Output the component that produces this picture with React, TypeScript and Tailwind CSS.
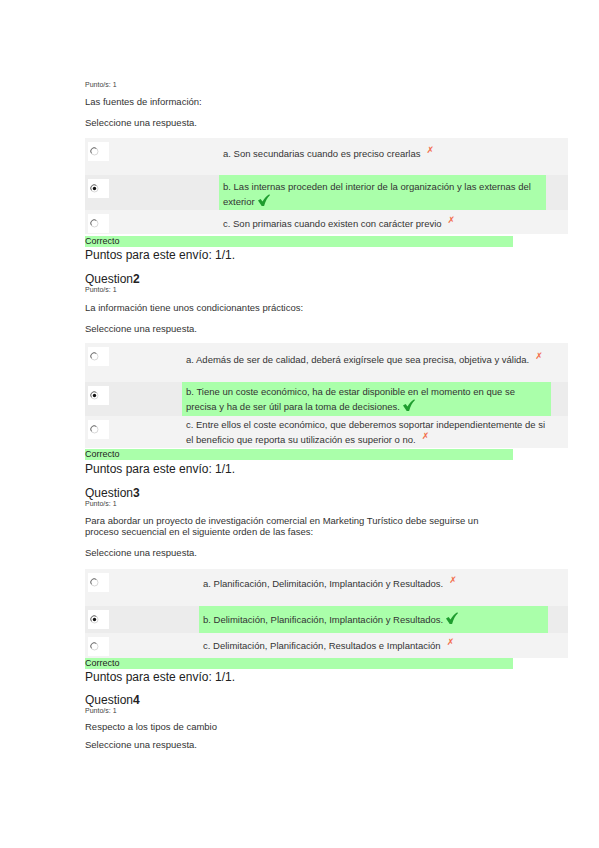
import React from "react";

type Answer = {
  row: string; // height + bg
  cell: string; // padding-top + line-height
  selected?: boolean;
  ok?: boolean;
  text: React.ReactNode;
};

type Question = {
  num?: number;
  head: string; // margin before heading block
  prompt: React.ReactNode;
  promptCls: string;
  selCls: string;
  tableCls: string;
  radioCol: string;
  greenW: string;
  answers: Answer[];
  tail?: { correcto: string; puntos: string };
};

function Radio({ checked }: { checked?: boolean }) {
  return (
    <svg width="9" height="9" viewBox="0 0 9 9">
      <circle cx="4.5" cy="4.5" r="3.5" fill="#fff" stroke="#d4d4d4" strokeWidth="0.9" />
      <path d="M1.4 6.3 A3.5 3.5 0 0 1 6.3 1.4" fill="none" stroke="#707070" strokeWidth="1" />
      {checked && <circle cx="4.5" cy="4.5" r="1.7" fill="#111" />}
    </svg>
  );
}

const Wrong = () => (
  <span className="ml-[6px] align-[4px] text-[9px] leading-none text-[#f26d4b] font-['DejaVu_Sans',sans-serif]">
    ✗
  </span>
);

const Right = () => (
  <svg width="12" height="12" viewBox="0 0 12 12" className="ml-[3px] inline-block align-[-1px]">
    <path
      d="M0 6.6 L2.6 5 L4.5 7.6 C6.1 4.6 8.3 2 11.3 0.2 L11.9 1.3 C9.3 3.8 7.3 7.4 6.1 12 L3.7 12 Z"
      fill="#1f9d2f"
    />
  </svg>
);

const questions: Question[] = [
  {
    head: "mt-0",
    prompt: "Las fuentes de información:",
    promptCls: "mt-[6px] leading-[12px]",
    selCls: "mt-[9px]",
    tableCls: "mt-[9px]",
    radioCol: "w-[134px]",
    greenW: "w-[327px]",
    answers: [
      { row: "h-[37px] bg-[#f3f3f3]", cell: "pt-[8px] leading-[14px]", text: <>a. Son secundarias cuando es preciso crearlas<Wrong /></> },
      {
        row: "h-[35px] bg-[#ececec]",
        cell: "pt-[4px] leading-[15px]",
        selected: true,
        ok: true,
        text: <>b. Las internas proceden del interior de la organización y las externas del<br />exterior<Right /></>,
      },
      { row: "h-[24px] bg-[#f3f3f3]", cell: "pt-[6px] leading-[14px]", text: <>c. Son primarias cuando existen con carácter previo<Wrong /></> },
    ],
    tail: { correcto: "mt-[2px]", puntos: "mt-[1px]" },
  },
  {
    num: 2,
    head: "mt-[11px]",
    prompt: "La información tiene unos condicionantes prácticos:",
    promptCls: "mt-[7px] leading-[12px]",
    selCls: "mt-[9px]",
    tableCls: "mt-[8px]",
    radioCol: "w-[97px]",
    greenW: "w-[369px]",
    answers: [
      { row: "h-[39px] bg-[#f3f3f3]", cell: "pt-[9px] leading-[14px]", text: <>a. Además de ser de calidad, deberá exigírsele que sea precisa, objetiva y válida.<Wrong /></> },
      {
        row: "h-[34px] bg-[#ececec]",
        cell: "pt-[3px] leading-[14px]",
        selected: true,
        ok: true,
        text: <>b. Tiene un coste económico, ha de estar disponible en el momento en que se<br />precisa y ha de ser útil para la toma de decisiones.<Right /></>,
      },
      {
        row: "h-[32px] bg-[#f3f3f3]",
        cell: "pt-[2px] leading-[14px]",
        text: <>c. Entre ellos el coste económico, que deberemos soportar independientemente de si<br />el beneficio que reporta su utilización es superior o no.<Wrong /></>,
      },
    ],
    tail: { correcto: "mt-[1px]", puntos: "mt-[2px]" },
  },
  {
    num: 3,
    head: "mt-[11px]",
    prompt: <>Para abordar un proyecto de investigación comercial en Marketing Turístico debe seguirse un<br />proceso secuencial en el siguiente orden de las fases:</>,
    promptCls: "mt-[6px] leading-[11px]",
    selCls: "mt-[10px]",
    tableCls: "mt-[10px]",
    radioCol: "w-[114px]",
    greenW: "w-[349px]",
    answers: [
      { row: "h-[37px] bg-[#f3f3f3]", cell: "pt-[7px] leading-[14px]", text: <>a. Planificación, Delimitación, Implantación y Resultados.<Wrong /></> },
      { row: "h-[27px] bg-[#ececec]", cell: "pt-[6px] leading-[14px]", selected: true, ok: true, text: <>b. Delimitación, Planificación, Implantación y Resultados.<Right /></> },
      { row: "h-[25px] bg-[#f3f3f3]", cell: "pt-[5px] leading-[14px]", text: <>c. Delimitación, Planificación, Resultados e Implantación<Wrong /></> },
    ],
    tail: { correcto: "mt-0", puntos: "mt-[1px]" },
  },
  {
    num: 4,
    head: "mt-[10px]",
    prompt: "Respecto a los tipos de cambio",
    promptCls: "mt-[5px] leading-[12px]",
    selCls: "mt-[6px]",
    tableCls: "",
    radioCol: "",
    greenW: "",
    answers: [],
  },
];

function QuestionBlock({ q }: { q: Question }) {
  return (
    <div className={q.head}>
      {q.num && (
        <div className="text-[12px] leading-[12px] text-[#222]">
          Question<span className="font-bold">{q.num}</span>
        </div>
      )}
      <div className="text-[7px] leading-[10px] text-[#444]">Punto/s: 1</div>
      <div className={`text-[9.5px] text-[#333] ${q.promptCls}`}>{q.prompt}</div>
      <div className={`text-[9.5px] leading-[12px] text-[#333] ${q.selCls}`}>Seleccione una respuesta.</div>

      {q.answers.length > 0 && (
        <div className={`flex w-[483px] flex-col ${q.tableCls}`}>
          {q.answers.map((a, i) => (
            <div key={i} className={`flex items-stretch ${a.row}`}>
              <div className={`shrink-0 pl-[3px] pt-[4px] ${q.radioCol}`}>
                <div className="flex h-[19px] w-[21px] items-center bg-white pl-[2px]">
                  <Radio checked={a.selected} />
                </div>
              </div>
              <div
                className={`shrink-0 pl-[4px] text-[9.5px] text-[#333] whitespace-nowrap ${q.greenW} ${a.cell} ${
                  a.ok ? "bg-[#aaffaa]" : ""
                }`}
              >
                {a.text}
              </div>
            </div>
          ))}
        </div>
      )}

      {q.tail && (
        <>
          <div className={`h-[11px] w-[428px] bg-[#aaffaa] text-[9px] leading-[11px] text-[#222] ${q.tail.correcto}`}>
            Correcto
          </div>
          <div className={`text-[12px] leading-[14px] text-[#222] ${q.tail.puntos}`}>Puntos para este envío: 1/1.</div>
        </>
      )}
    </div>
  );
}

export default function App() {
  return (
    <div className="flex min-h-[848px] w-[599px] flex-col bg-white pl-[85px] pt-[80px] font-['Liberation_Sans',Arial,sans-serif]">
      {questions.map((q, i) => (
        <QuestionBlock key={i} q={q} />
      ))}
    </div>
  );
}
